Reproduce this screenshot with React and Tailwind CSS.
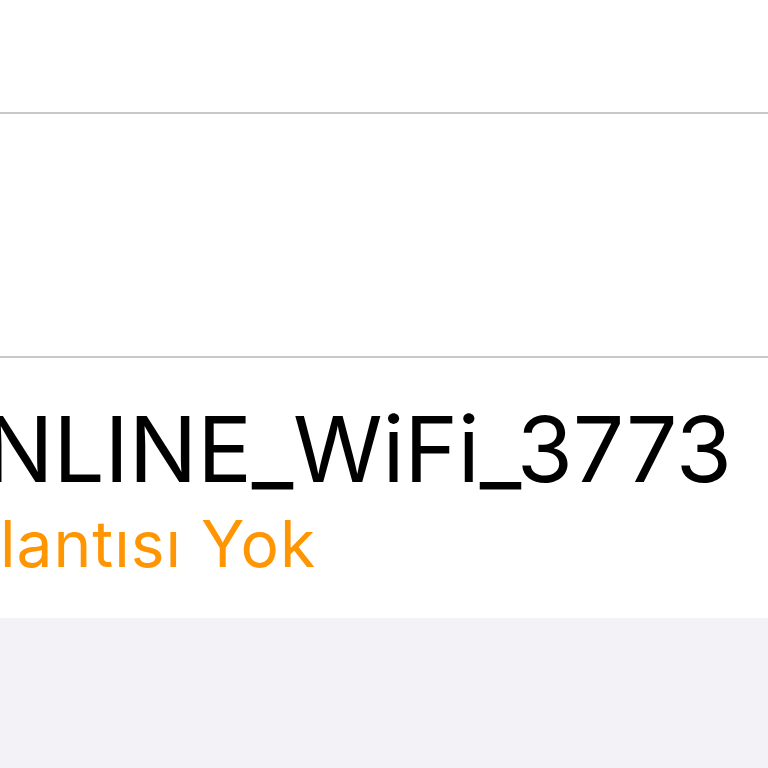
export default function App() {
  return (
    <div className="w-[768px] h-[768px] overflow-hidden bg-[#f2f2f7] flex flex-col" style={{ fontFamily: 'Inter, "Noto Sans", sans-serif' }}>
      <div className="h-[112px] bg-white shrink-0" />
      <div className="h-[2px] bg-[#c8c7cc] shrink-0" />
      <div className="h-[242px] bg-white shrink-0" />
      <div className="h-[2px] bg-[#c8c7cc] shrink-0" />
      <div className="h-[260px] bg-white shrink-0 flex flex-col pt-[46px] whitespace-nowrap">
        <div className="text-[91px] leading-[91px] text-black ml-[-15px] tracking-[-0.2px]">NLINE_WiFi_3773</div>
        <div className="text-[64px] leading-[64px] text-[#ff9500] mt-[17px] ml-[0px] tracking-[1px]">lantısı Yok</div>
      </div>
      <div className="flex-1 bg-[#f2f2f7]" />
    </div>
  );
}
